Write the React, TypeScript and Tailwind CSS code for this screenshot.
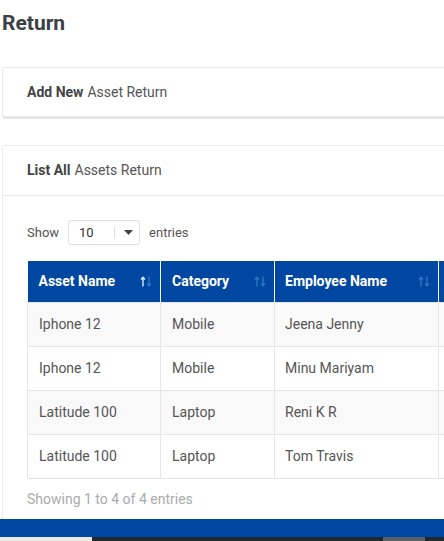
import React from 'react'

const rows = [
  { asset: 'Iphone 12', category: 'Mobile', employee: 'Jeena Jenny' },
  { asset: 'Iphone 12', category: 'Mobile', employee: 'Minu Mariyam' },
  { asset: 'Latitude 100', category: 'Laptop', employee: 'Reni K R' },
  { asset: 'Latitude 100', category: 'Laptop', employee: 'Tom Travis' },
]

function SortIcon({ active }: { active?: boolean }) {
  const up = active ? '#dce9f7' : '#2a78c4'
  return (
    <svg width="12" height="11" viewBox="0 0 12 11" className="mr-[2px]">
      <path d="M3 10.5V1.5M1 3.5L3 1.2 5 3.5" stroke={up} strokeWidth="1.4" fill="none" />
      <path d="M9 0.5v9M7 7.5l2 2.3 2-2.3" stroke="#2a78c4" strokeWidth="1.4" fill="none" />
    </svg>
  )
}

export default function App() {
  return (
    <div className="w-[444px] h-[541px] overflow-hidden bg-white flex flex-col" style={{ fontFamily: 'Roboto, sans-serif' }}>
      <div className="flex-1 pl-[2px] overflow-hidden">
        <div className="w-[620px]">
          <h1 className="text-[21px] leading-[24px] font-bold text-[#3b4045] pt-[11px]">Return</h1>

          <div className="mt-[32px] h-[52px] rounded-[3px] border border-[#e8e8e8] border-b-[3px] border-b-[#e6e6e6] flex items-center pl-[24px] text-[14px] text-[#555]">
            <span className="font-bold text-[#444] mr-[4px]">Add New</span>Asset Return
          </div>

          <div className="mt-[26px] rounded-[3px] border border-[#ececec] pb-[40px]">
            <div className="h-[50px] flex items-center pl-[24px] text-[14px] text-[#555] border-b border-[#e8e8e8]">
              <span className="font-bold text-[#444] mr-[4px]">List All</span>Assets Return
            </div>

            <div className="pl-[24px] pt-[24px]">
              <div className="flex items-center text-[13px] text-[#555] h-[25px]">
                <span>Show</span>
                <div className="ml-[9px] w-[72px] h-[25px] border border-[#dedede] rounded-[3px] flex items-center">
                  <span className="pl-[10px] w-[45px] text-[#333]">10</span>
                  <span className="w-px h-[12px] bg-[#ddd]" />
                  <svg className="ml-[9px]" width="9" height="5" viewBox="0 0 9 5">
                    <path d="M0 0h9L4.5 5z" fill="#444" />
                  </svg>
                </div>
                <span className="ml-[9px]">entries</span>
              </div>

              <table className="mt-[16px] border-collapse text-[14px]">
                <thead>
                  <tr className="bg-[#0047a1] text-white h-[41px]">
                    <th className="w-[133px] text-left font-bold pl-[11px] pr-[6px] border-r border-white">
                      <div className="flex items-center justify-between">
                        Asset Name <SortIcon active />
                      </div>
                    </th>
                    <th className="w-[114px] text-left font-bold pl-[11px] pr-[6px] border-r border-white">
                      <div className="flex items-center justify-between">
                        Category <SortIcon />
                      </div>
                    </th>
                    <th className="w-[164px] text-left font-bold pl-[10px] pr-[6px] border-r border-white">
                      <div className="flex items-center justify-between">
                        Employee Name <SortIcon />
                      </div>
                    </th>
                    <th className="w-[160px]" />
                  </tr>
                </thead>
                <tbody className="text-[#555]">
                  {rows.map((r, i) => (
                    <tr key={i} className={`h-[44px] border-t border-[#e6e6e6] ${i % 2 === 0 ? 'bg-[#f9f9f9]' : 'bg-white'}`}>
                      <td className="pl-[11px] border-l border-r border-[#e6e6e6]">{r.asset}</td>
                      <td className="pl-[11px] border-r border-[#e6e6e6]">{r.category}</td>
                      <td className="pl-[10px] border-r border-[#e6e6e6]">{r.employee}</td>
                      <td className="pl-[10px] border-r border-[#e6e6e6]" />
                    </tr>
                  ))}
                  <tr className="h-0 border-t border-[#e6e6e6]" />
                </tbody>
              </table>

              <div className="pt-[11px] text-[14px] text-[#aaa]">Showing 1 to 4 of 4 entries</div>
            </div>
          </div>
        </div>
      </div>
      <div className="h-[18px] bg-[#0047a1] shrink-0" />
      <div className="h-[4px] shrink-0 flex bg-[#1e2a30]">
        <div className="w-[92px] bg-[#e8e8e8]" />
        <div className="w-[291px]" />
        <div className="w-[42px] bg-[#5a6166]" />
      </div>
    </div>
  )
}
